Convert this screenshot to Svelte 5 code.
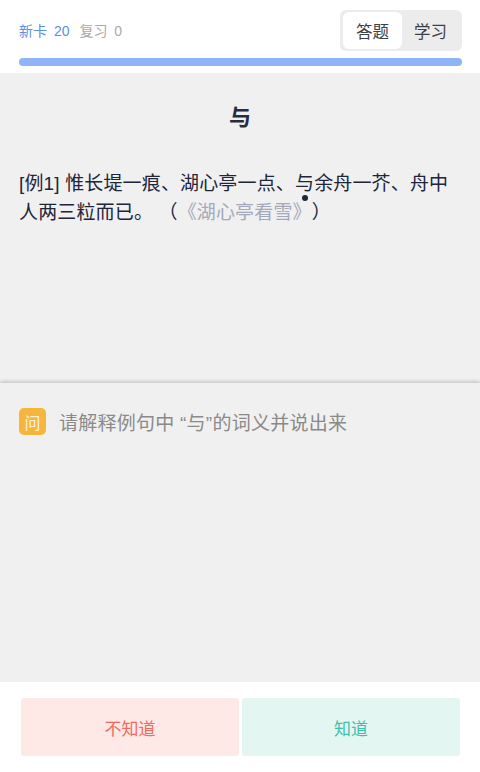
<script>
  const stats = { fresh: 20, review: 0 };
</script>

<div class="page">
  <header class="top">
    <div class="row">
      <div class="stats">
        <span class="fresh">新卡 {stats.fresh}</span>
        <span class="review">复习 {stats.review}</span>
      </div>
      <div class="tabs">
        <div class="tab active">答题</div>
        <div class="tab">学习</div>
      </div>
    </div>
    <div class="bar"></div>
  </header>

  <section class="card">
    <h1>与</h1>
    <p class="example">
      [例1] 惟长堤一痕、湖心亭一点、<span class="mark">与</span>余舟一芥、舟中人两三粒而已。 <span class="source">（<em>《湖心亭看雪》</em>）</span>
    </p>
  </section>

  <section class="question">
    <div class="ask">
      <span class="badge">问</span>
      <span class="ask-text">请解释例句中 “与”的词义并说出来</span>
    </div>
  </section>

  <footer class="actions">
    <button class="no">不知道</button>
    <button class="yes">知道</button>
  </footer>
</div>

<style>
  :global(body) {
    margin: 0;
    background: #fff;
  }
  .page {
    width: 480px;
    height: 772px;
    display: flex;
    flex-direction: column;
    overflow: hidden;
    background: #f0f0f0;
    font-family: "Liberation Sans", "Noto Sans CJK SC", sans-serif;
    text-spacing-trim: space-all;
  }
  .top {
    height: 73px;
    box-sizing: border-box;
    padding: 10px 18px 0 19px;
    background: #fff;
  }
  .row {
    height: 41px;
    display: flex;
    align-items: center;
    justify-content: space-between;
  }
  .stats {
    display: flex;
    gap: 10px;
    font-size: 14px;
    word-spacing: 3px;
    position: relative;
    top: -1px;
  }
  .fresh {
    color: #5b8fe0;
  }
  .review {
    color: #a9a9a9;
  }
  .tabs {
    width: 122px;
    height: 41px;
    box-sizing: border-box;
    padding: 2px 3px;
    display: flex;
    border-radius: 6px;
    background: #ececec;
  }
  .tab {
    flex: 1;
    display: flex;
    align-items: center;
    justify-content: center;
    font-size: 16.5px;
    color: #3c4048;
  }
  .tab.active {
    flex: 0 0 59px;
    border-radius: 6px;
    background: #fff;
  }
  .bar {
    height: 8px;
    margin-top: 7px;
    border-radius: 4px;
    background: #8fb4f8;
  }
  .card {
    height: 310px;
    box-sizing: border-box;
    padding: 27px 19px 0;
  }
  h1 {
    margin: 0 0 33px;
    text-align: center;
    font-size: 22px;
    line-height: 36px;
    font-weight: 700;
    color: #262c42;
  }
  .example {
    margin: 0;
    font-size: 19px;
    letter-spacing: 0.15px;
    line-height: 29px;
    color: #20253a;
  }
  .mark {
    position: relative;
  }
  .mark::after {
    content: "";
    position: absolute;
    left: 7px;
    top: 22px;
    width: 6px;
    height: 6px;
    border-radius: 50%;
    background: #20253a;
  }
  .source em {
    font-style: normal;
    color: #a3a9bb;
  }
  .question {
    flex: 1;
    padding: 25px 19px 0;
    box-shadow: 0 -2px 3px rgba(0, 0, 0, 0.16);
  }
  .ask {
    display: flex;
    align-items: center;
    gap: 13px;
  }
  .badge {
    width: 27px;
    height: 27px;
    display: flex;
    align-items: center;
    justify-content: center;
    border-radius: 5px;
    background: #f6b63e;
    color: #fdf0d6;
    font-size: 16px;
  }
  .ask-text {
    font-size: 19px;
    letter-spacing: 0.25px;
    color: #8a8a8a;
  }
  .actions {
    height: 90px;
    box-sizing: border-box;
    padding: 16px 20px 0 21px;
    display: flex;
    gap: 3px;
    background: #fff;
  }
  button {
    flex: 1;
    height: 58px;
    border: 0;
    border-radius: 3px;
    font: inherit;
    font-size: 17px;
  }
  .no {
    background: #ffe9e6;
    color: #f0695f;
  }
  .yes {
    background: #e4f6f2;
    color: #3fc0aa;
  }
</style>
